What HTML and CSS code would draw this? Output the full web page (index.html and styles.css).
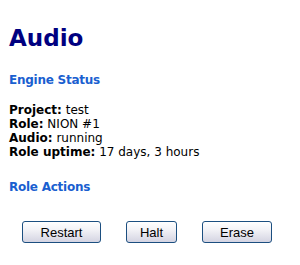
FILE: index.html
```html
<!DOCTYPE html>
<html>
<head>
<meta charset="utf-8">
<link rel="stylesheet" href="styles.css">
</head>
<body>
<h1 class="title">Audio</h1>
<h2 class="section section-first">Engine Status</h2>
<div class="status">
  <div><b>Project:</b> test</div>
  <div><b>Role:</b> NION #1</div>
  <div><b>Audio:</b> running</div>
  <div><b>Role uptime:</b> 17 days, 3 hours</div>
</div>
<h2 class="section">Role Actions</h2>
<div class="actions">
  <button class="btn btn-restart">Restart</button>
  <button class="btn btn-halt">Halt</button>
  <button class="btn btn-erase">Erase</button>
</div>
</body>
</html>
```

FILE: styles.css
```css
html, body { background: #fff; }
body {
  margin: 0;
  padding: 0 9px;
  font-family: "DejaVu Sans", Verdana, sans-serif;
  font-size: 12px;
  color: #000;
}
.title {
  margin: 0;
  padding-top: 26px;
  font-size: 23px;
  line-height: 24px;
  font-weight: bold;
  color: #000080;
}
.section {
  margin: 21px 0 0;
  font-size: 12px;
  line-height: 14px;
  font-weight: bold;
  letter-spacing: -0.25px;
  color: #1a5fd0;
}
.section-first {
  margin-top: 23px;
}
.status {
  margin-top: 16px;
  line-height: 14px;
}
.actions {
  display: flex;
  gap: 25px;
  margin-top: 27px;
  padding-left: 13px;
}
.btn {
  box-sizing: border-box;
  height: 22px;
  padding: 0;
  font-family: "Liberation Sans", Arial, sans-serif;
  font-size: 13px;
  color: #000;
  border: 1px solid #1c4f80;
  border-radius: 3px;
  background: linear-gradient(#ffffff, #f2f2f6 40%, #d4d4e2);
}
.btn-restart { width: 79px; }
.btn-halt { width: 51px; }
.btn-erase { width: 70px; }
```
